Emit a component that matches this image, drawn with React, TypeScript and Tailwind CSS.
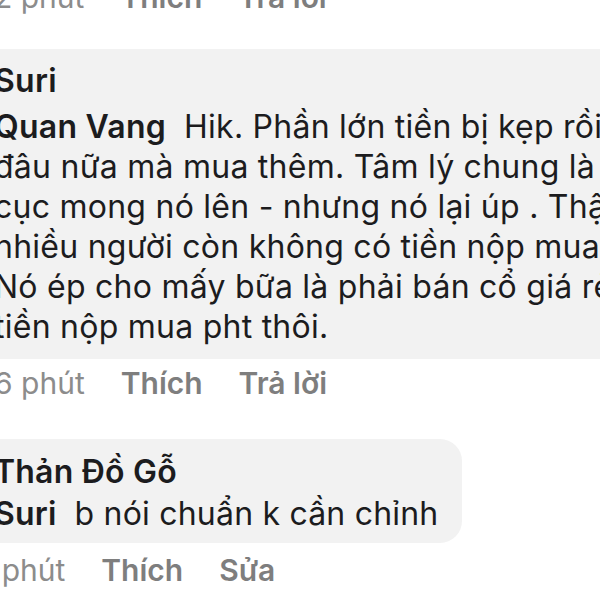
import React from 'react';

const body = [
  'đâu nữa mà mua thêm. Tâm lý chung là',
  'cục mong nó lên - nhưng nó lại úp . Thật',
  'nhiều người còn không có tiền nộp mua',
  'Nó ép cho mấy bữa là phải bán cổ giá rẻ',
  'tiền nộp mua pht thôi.',
];

function Meta({ time, actions, className }: { time: string; actions: string[]; className: string }) {
  return (
    <div className={`flex items-center gap-[36px] whitespace-nowrap text-[30px] leading-[34px] ${className}`}>
      <span className="text-[#8c8c8c]">{time}</span>
      {actions.map((a) => (
        <span key={a} className="font-semibold text-[#7e7e7e]">{a}</span>
      ))}
    </div>
  );
}

export default function App() {
  return (
    <div className="w-[600px] h-[600px] overflow-hidden bg-white font-['Inter','Liberation_Sans',sans-serif] text-[#1c1c1e] antialiased">
      <Meta time="2 phút" actions={['Thích', 'Trả lời']} className="-mt-[20px] -ml-[6px]" />

      <div className="mt-[35px] -ml-[20px] w-[700px] bg-[#f2f2f2] rounded-[22px] pt-[11px] pb-[12px] pl-[14px] whitespace-nowrap text-[32px] leading-[40px] tracking-[0.25px]">
        <div className="font-semibold leading-[42px] mb-[5px]">Suri</div>
        <div>
          <span className="font-semibold">Quan Vang</span>
          <span className="ml-[18px]">Hik. Phần lớn tiền bị kẹp rồi</span>
        </div>
        {body.map((l) => (
          <div key={l}>{l}</div>
        ))}
      </div>

      <Meta time="6 phút" actions={['Thích', 'Trả lời']} className="mt-[7px] -ml-[6px]" />

      <div className="mt-[39px] -ml-[20px] w-[482px] bg-[#f2f2f2] rounded-[22px] pt-[12px] pb-[8px] pl-[14px] whitespace-nowrap text-[32px] leading-[42px] tracking-[0.2px]">
        <div className="font-semibold">Thản Đồ Gỗ</div>
        <div>
          <span className="font-semibold">Suri</span>
          <span className="ml-[18px]">b nói chuẩn k cần chỉnh</span>
        </div>
      </div>

      <Meta time="1 phút" actions={['Thích', 'Sửa']} className="mt-[10px] -ml-[19px]" />
    </div>
  );
}
